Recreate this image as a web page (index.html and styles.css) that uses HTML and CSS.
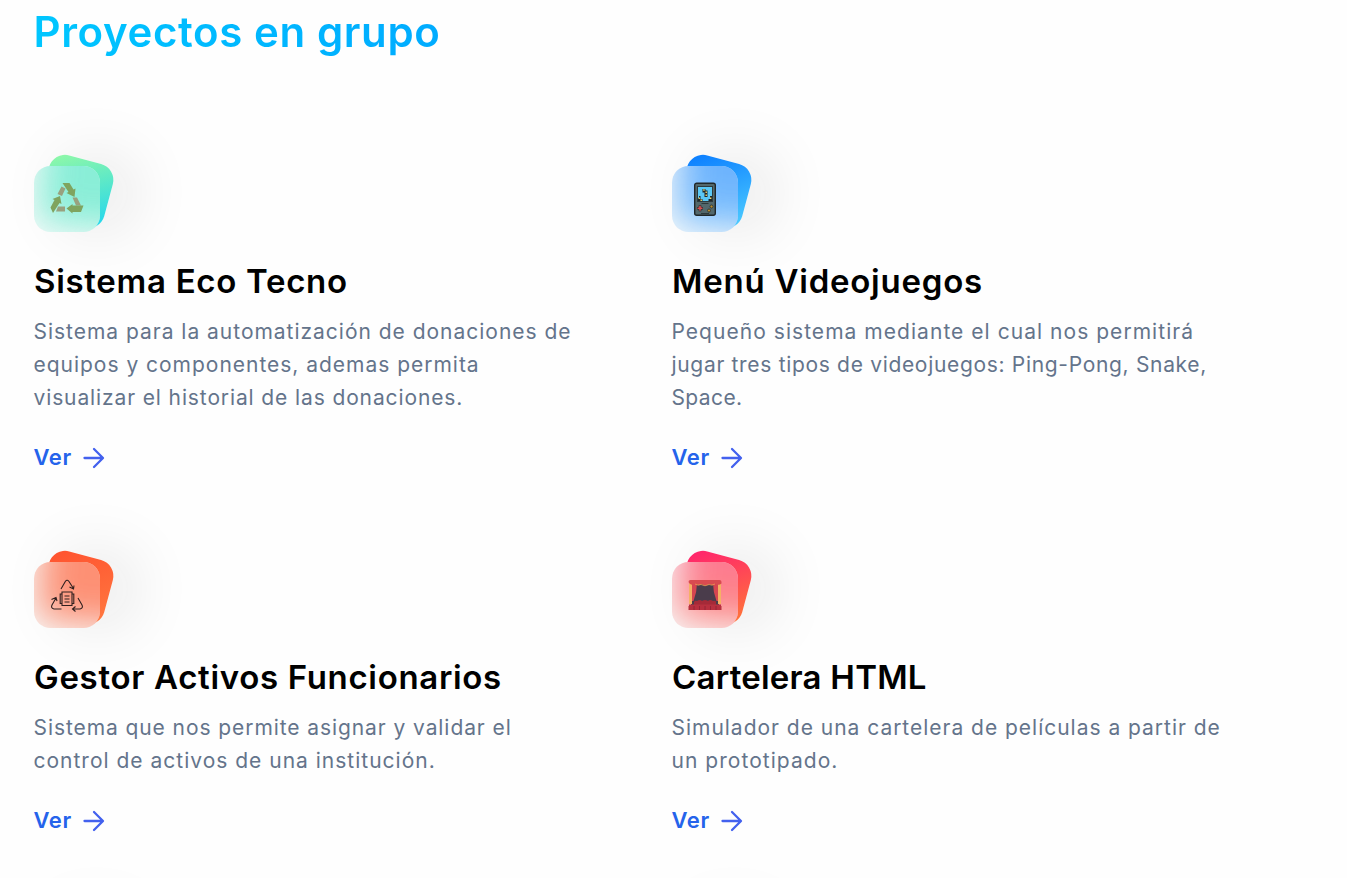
FILE: index.html
```html
<!DOCTYPE html>
<html lang="es">
<head>
<meta charset="utf-8">
<title>Proyectos en grupo</title>
<link rel="stylesheet" href="styles.css">
</head>
<body>
<main class="page">
  <h1 class="title">Proyectos en grupo</h1>
  <section class="projects">
    <article class="card">
      <div class="tile"><span class="tile-back green"></span><span class="tile-front"><span class="glow green"></span>
        <svg class="pic" viewBox="0 0 34 34">
          <g fill="#99a17f"><path d="M11.500 4.500l4 2-3.500 7.500-4.500-2zM22.500 15.500h4.500l4 8h-5zM8 24.500h7v5H6z"/></g>
          <g fill="#7fa45f"><path d="M12.500 1h7l4 6.500 2-1-1 8.500-8-4 2-1zM3 31L.500 25.500 4.500 18l-2-1 7.500-3 1.500 8-2-1zM16.500 26.500l6-4.500v1.500H33.500L31 30h-8.500v1.500z"/></g>
        </svg></span></div>
      <h2 class="name ls-70">Sistema Eco Tecno</h2>
      <p class="text"><span class="ls-98">Sistema para la automatización de donaciones de</span><br><span class="ls-98">equipos y componentes, ademas permita</span><br><span class="ls-88">visualizar el historial de las donaciones.</span></p>
      <a class="link">Ver<svg class="arrow" viewBox="0 0 22 22"><path d="M1.500 11h18M11 2l9 9-9 9"/></svg></a>
    </article>
    <article class="card">
      <div class="tile"><span class="tile-back blue"></span><span class="tile-front"><span class="glow blue"></span>
        <svg class="pic" viewBox="0 0 34 34">
          <rect x="6.700" y="1.200" width="20.600" height="32" rx="2" fill="#53686c" stroke="#202729" stroke-width="1.400"/>
          <rect x="9" y="4" width="16" height="16" fill="#2d3a3e"/><rect x="10" y="5" width="14" height="14" fill="#5bc8f5"/>
          <path d="M14.500 7h3v1.500h2V15h-3v-4.500h-2zM10 16h1v-2h1.500v3h2v2H10zM20.500 17h1.500v-3h2v5h-3.500z" fill="#202729"/>
          <path d="M15.200 7.300h1.500v1.400h-1.500zM17.500 9.500h1.400V11h-1.400zM17.500 12.500h1.400V14h-1.400zM10.500 15.500h1.400v1.400h-1.400zM12.500 17.500h1.400v1.400h-1.400zM22 15.500h1.400v1.400H22z" fill="#f0da70"/>
          <path d="M13.500 21.500h7M13 31.500h8" stroke="#2d393b" stroke-width="1.200"/><path d="M12 23.200v6M9 26.200h6" stroke="#202729" stroke-width="2.600"/><path d="M12 23.700v5M9.500 26.200h5" stroke="#d84f50" stroke-width="1.600"/>
          <circle cx="23.500" cy="24.500" r="1.500" fill="#bb902f" stroke="#202729" stroke-width=".7"/><circle cx="21" cy="28.500" r="1.500" fill="#bb902f" stroke="#202729" stroke-width=".7"/>
        </svg></span></div>
      <h2 class="name ls-76">Menú Videojuegos</h2>
      <p class="text"><span class="ls-104">Pequeño sistema mediante el cual nos permitirá</span><br><span class="ls-68">jugar tres tipos de videojuegos: Ping-Pong, Snake,</span><br><span class="ls-40">Space.</span></p>
      <a class="link">Ver<svg class="arrow" viewBox="0 0 22 22"><path d="M1.500 11h18M11 2l9 9-9 9"/></svg></a>
    </article>
    <article class="card">
      <div class="tile"><span class="tile-back orange"></span><span class="tile-front"><span class="glow orange"></span>
        <svg class="pic" viewBox="0 0 34 34" fill="none" stroke="#30201f" stroke-width="1.100">
          <path d="M11 11l4.300-7.500q1.700-2.500 3.700 0l4.500 7M19.500 9l4 2 .5-3.500M11.500 31H4q-3.500-1-2-4l4-7M1.500 21.500l4.500-2 1 3.500M28 20l4 7q1.500 3-2 4h-7.500M25.500 28.500l-3 2.500 3 2.500"/>
          <path d="M12 14h10v13.500H12zM12 16h-1.800v9.500H12M22 16h1.800v9.500H22M14.500 18h5M14.500 21h5M14.500 24h5"/>
        </svg></span></div>
      <h2 class="name ls-68">Gestor Activos Funcionarios</h2>
      <p class="text"><span class="ls-92">Sistema que nos permite asignar y validar el</span><br><span class="ls-100">control de activos de una institución.</span></p>
      <a class="link">Ver<svg class="arrow" viewBox="0 0 22 22"><path d="M1.500 11h18M11 2l9 9-9 9"/></svg></a>
    </article>
    <article class="card">
      <div class="tile"><span class="tile-back pink"></span><span class="tile-front"><span class="glow pink"></span>
        <svg class="pic" viewBox="0 0 34 34">
          <path d="M3 4h28v23H3z" fill="#4a3c4b"/>
          <path d="M1 5h3v21H1zM30 5h3v21h-3z" fill="#f5b065"/><path d="M4 5h5q0 9-3.500 18H4zM30 5h-5q0 9 3.500 18H30z" fill="#d64550"/>
          <path d="M.500 4q0-2 2-2h29q2 0 2 2v1.500q-3 2.500-6 0-3 3-6 .5-4 2.500-8 0-3 2.500-6-.5-3 2.500-6 0z" fill="#d84b50"/><path d="M7 6q3 2 6 .5 4 2.500 8 0 3 1.500 6-.5" fill="none" stroke="#f0a052" stroke-width=".8"/>
          <path d="M6 27v-3q1-2 3-1 3-2 5 0 3-2 6 0 2-2 5 0 3-1 3 1v3z" fill="#a52a38"/>
          <path d="M.500 28q3-3 5.500 0 3-3 5.500 0 3-3 5.500 0 3-3 5.500 0 3-3 5.500 0 3-3 5.500 0v4H.500zM1 26.500h32v3H1z" fill="#b8303f"/><path d="M6 28v4M11.500 28v4M17 28v4M22.500 28v4M28 28v4" stroke="#8e2232" stroke-width=".8"/>
        </svg></span></div>
      <h2 class="name ls-23">Cartelera HTML</h2>
      <p class="text"><span class="ls-98">Simulador de una cartelera de películas a partir de</span><br><span class="ls-104">un prototipado.</span></p>
      <a class="link">Ver<svg class="arrow" viewBox="0 0 22 22"><path d="M1.500 11h18M11 2l9 9-9 9"/></svg></a>
    </article>
    <div class="card"><div class="tile"><span class="tile-back green"></span></div></div>
    <div class="card"><div class="tile"><span class="tile-back blue"></span></div></div>
  </section>
</main>
</body>
</html>
```
FILE: styles.css
```css
* { box-sizing: border-box; margin: 0; padding: 0; }
body { background: #fefefe; font-family: Inter, "Liberation Sans", sans-serif; }
.page { height: 878px; overflow: hidden; padding: 12px 37px 0 33.5px; }
.title { height: 44px; margin-bottom: 22px; font-size: 42px; font-weight: 600; line-height: 39px; letter-spacing: .6px; white-space: nowrap; color: transparent; background: linear-gradient(to right, #00c6ff, #0072ff); background-clip: text; -webkit-background-clip: text; }
.projects { display: grid; grid-template-columns: 638px 638px; }
.card { padding: 88px 0 0 .5px; white-space: nowrap; }
.tile { position: relative; width: 66px; height: 66px; }
.tile-back, .tile-front { position: absolute; inset: 0; border-radius: 16.5px; }
.tile-back { transform: rotate(15deg); transform-origin: 100% 100%; box-shadow: 20px -4px 66px -1px rgba(23, 23, 23, .12); }
.tile-front { display: flex; align-items: center; justify-content: center; overflow: hidden; background: #f8fafa; }
.glow { position: absolute; inset: -70px -70px 3px 8px; transform: rotate(5deg); filter: blur(18px); opacity: .66; }
.green { background: linear-gradient(150deg, #8ff8a8 5%, #28d8ea 90%); }
.blue { background: linear-gradient(145deg, #087aff, #50d0ff); }
.orange { background: linear-gradient(145deg, #ff512f, #ff7a40); }
.pink { background: linear-gradient(145deg, #ff1f70, #ff7a35); }
.glow.green { background: #51e8c6; }
.glow.blue { background: linear-gradient(#1b88ff 40%, #40a4ff); }
.glow.orange { background: #ff5a30; }
.glow.pink { background: linear-gradient(#ff3060 40%, #ff5548); }
.pic { position: relative; left: -.5px; width: 34px; height: 34px; }
.name { margin-top: 24px; font-size: 33px; font-weight: 600; line-height: 50px; color: #000; }
.text { margin: 9px 0 0 -.5px; font-size: 21px; line-height: 33px; color: #64748b; }
.link { display: flex; align-items: center; gap: 11px; margin: 26px 0 0 -.5px; height: 34px; line-height: 32px; font-size: 22px; font-weight: 600; letter-spacing: .6px; color: #2563eb; }
.arrow { width: 22px; height: 22px; margin-top: 2px; fill: none; stroke: #4361ee; stroke-width: 2.3; stroke-linecap: round; stroke-linejoin: round; }
.ls-23 { letter-spacing: .23px; }
.ls-40 { letter-spacing: .4px; }
.ls-68 { letter-spacing: .68px; }
.ls-70 { letter-spacing: .7px; }
.ls-76 { letter-spacing: .76px; }
.ls-88 { letter-spacing: .88px; }
.ls-92 { letter-spacing: .92px; }
.ls-98 { letter-spacing: .98px; }
.ls-100 { letter-spacing: 1px; }
.ls-104 { letter-spacing: 1.04px; }
```
